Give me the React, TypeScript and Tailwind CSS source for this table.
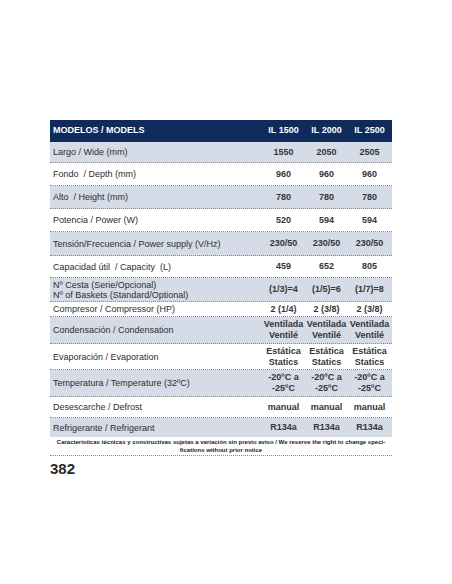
import React from "react";

type Row = {
	label: string[];
	values: string[][];
	h: string;
	shade: boolean;
};

const rows: Row[] = [
	{ label: ["Largo / Wide (mm)"], values: [["1550"], ["2050"], ["2505"]], h: "h-[21px]", shade: true },
	{ label: ["Fondo  / Depth (mm)"], values: [["960"], ["960"], ["960"]], h: "h-[23px]", shade: false },
	{ label: ["Alto  / Height (mm)"], values: [["780"], ["780"], ["780"]], h: "h-[23px]", shade: true },
	{ label: ["Potencia / Power (W)"], values: [["520"], ["594"], ["594"]], h: "h-[23px]", shade: false },
	{
		label: ["Tensión/Frecuencia / Power supply (V/Hz)"],
		values: [["230/50"], ["230/50"], ["230/50"]],
		h: "h-[24px]",
		shade: true,
	},
	{ label: ["Capacidad útil  / Capacity  (L)"], values: [["459"], ["652"], ["805"]], h: "h-[22px]", shade: false },
	{
		label: ["Nº Cesta (Serie/Opcional)", "Nº of Baskets (Standard/Optional)"],
		values: [["(1/3)=4"], ["(1/5)=6"], ["(1/7)=8"]],
		h: "h-[24px]",
		shade: true,
	},
	{ label: ["Compresor / Compressor (HP)"], values: [["2 (1/4)"], ["2 (3/8)"], ["2 (3/8)"]], h: "h-[15px]", shade: false },
	{
		label: ["Condensación / Condensation"],
		values: [
			["Ventilada", "Ventilé"],
			["Ventilada", "Ventilé"],
			["Ventilada", "Ventilé"],
		],
		h: "h-[27px]",
		shade: true,
	},
	{
		label: ["Evaporación / Evaporation"],
		values: [
			["Estática", "Statics"],
			["Estática", "Statics"],
			["Estática", "Statics"],
		],
		h: "h-[26px]",
		shade: false,
	},
	{
		label: ["Temperatura / Temperature (32ºC)"],
		values: [
			["-20ºC a", "-25ºC"],
			["-20ºC a", "-25ºC"],
			["-20ºC a", "-25ºC"],
		],
		h: "h-[27px]",
		shade: true,
	},
	{ label: ["Desescarche / Defrost"], values: [["manual"], ["manual"], ["manual"]], h: "h-[21px]", shade: false },
	{ label: ["Refrigerante / Refrigerant"], values: [["R134a"], ["R134a"], ["R134a"]], h: "h-[19px]", shade: true },
];

const App = () => {
	return (
		<div className="w-[452px] h-[584px] bg-white font-['Liberation_Sans',Arial,sans-serif] text-[#2e2e2e]">
			<div className="pt-[120px] pl-[50px] w-[392px]">
				{/* Header */}
				<div className="grid grid-cols-[212px_43px_43px_43px] h-[22px] bg-[#0f2b5c] text-white font-bold text-[9px] items-center">
					<div className="pl-[3px]">MODELOS / MODELS</div>
					<div className="text-center">IL 1500</div>
					<div className="text-center">IL 2000</div>
					<div className="text-center">IL 2500</div>
				</div>

				{/* Rows */}
				{rows.map((row, i) => (
					<div
						key={i}
						className={`grid grid-cols-[212px_43px_43px_43px] items-center ${row.h} ${
							row.shade ? "bg-[#d5dbe7]" : "bg-white"
						} ${i < rows.length - 1 ? "border-b border-dotted border-[#8a8a8a]" : ""}`}
					>
						<div className="pl-[3px] text-[9px] leading-[10px]">
							{row.label.map((l, j) => (
								<div key={j} className="whitespace-pre">
									{l}
								</div>
							))}
						</div>
						{row.values.map((v, k) => (
							<div key={k} className="text-center text-[9px] leading-[11px] font-bold text-[#363636]">
								{v.map((t, j) => (
									<div key={j}>{t}</div>
								))}
							</div>
						))}
					</div>
				))}

				{/* Note */}
				<div className="h-[19px] border-b border-dotted border-[#8a8a8a] pt-[1px] text-center text-[6px] leading-[8px] font-bold text-[#222]">
					<div className="whitespace-nowrap">
						Características técnicas y constructivas sujetas a variación sin previo aviso / We reserve the right to change speci-
					</div>
					<div>fications without prior notice</div>
				</div>

				{/* Page number */}
				<div className="text-[15px] leading-[17px] font-bold text-[#2a2a2a] mt-[4px]">382</div>
			</div>
		</div>
	);
};

export default App;
